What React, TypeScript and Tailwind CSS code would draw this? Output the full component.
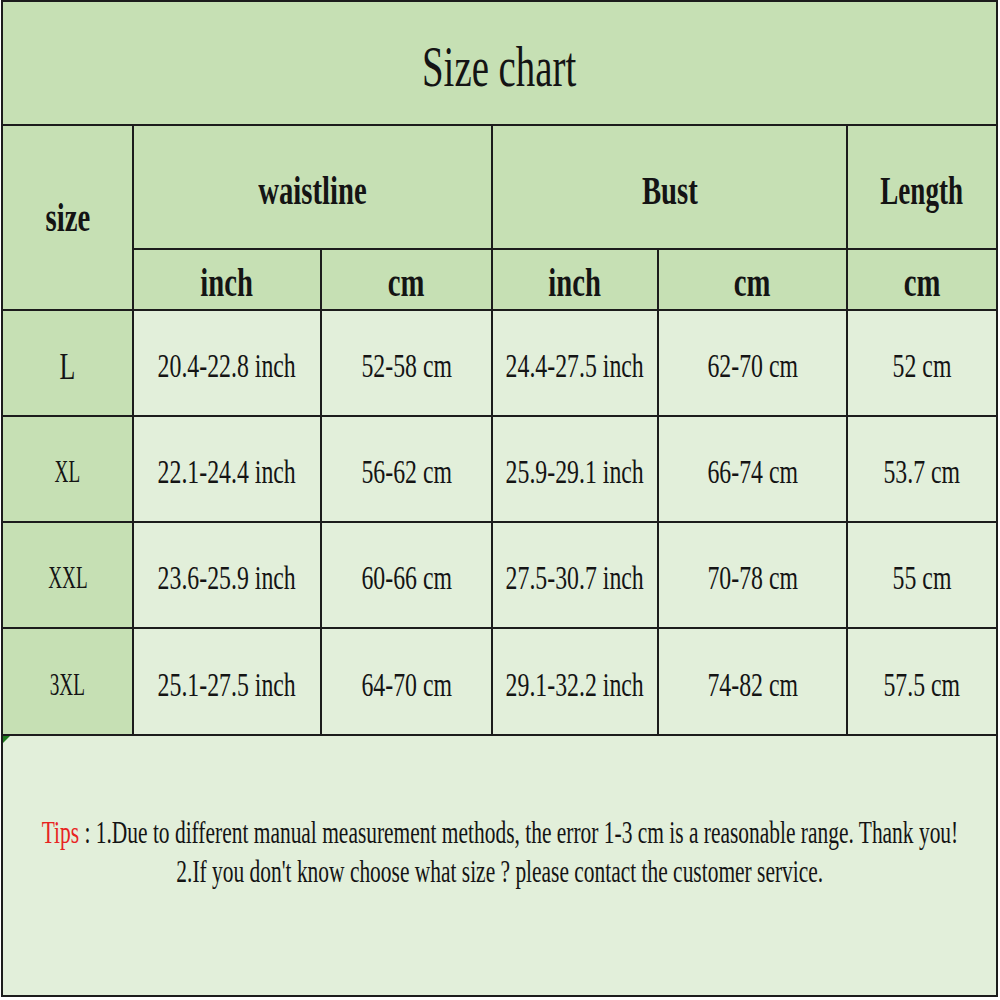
import React from "react";

const rows = [
  ["L", "20.4-22.8 inch", "52-58 cm", "24.4-27.5 inch", "62-70 cm", "52 cm"],
  ["XL", "22.1-24.4 inch", "56-62 cm", "25.9-29.1 inch", "66-74 cm", "53.7 cm"],
  ["XXL", "23.6-25.9 inch", "60-66 cm", "27.5-30.7 inch", "70-78 cm", "55 cm"],
  ["3XL", "25.1-27.5 inch", "64-70 cm", "29.1-32.2 inch", "74-82 cm", "57.5 cm"],
];

function Cell({
  children,
  className = "",
}: {
  children: React.ReactNode;
  className?: string;
}) {
  return (
    <div className={`flex items-center justify-center overflow-hidden ${className}`}>
      {children}
    </div>
  );
}

function T({ children, className = "" }: { children: React.ReactNode; className?: string }) {
  return (
    <span className={`inline-block whitespace-nowrap leading-none ${className}`}>
      {children}
    </span>
  );
}

export default function App() {
  return (
    <div className="w-[1000px] h-[1000px] overflow-hidden bg-white font-['Liberation_Serif',serif] text-[#141414]">
      <div className="ml-[1px] w-[997px] h-[997px] bg-[#1c1c1c] p-[2px] grid gap-[2px] grid-cols-[129px_186px_169px_164px_187px_148px] grid-rows-[122px_122px_59px_104px_104px_104px_105px_259px]">
        <Cell className="col-span-6 bg-[#c6e0b4]">
          <T className="text-[58px] scale-x-[0.67] pt-[8px]">Size chart</T>
        </Cell>

        <Cell className="row-span-2 bg-[#c6e0b4]">
          <T className="text-[41px] font-bold scale-x-[0.7]">size</T>
        </Cell>
        <Cell className="col-span-2 bg-[#c6e0b4]">
          <T className="text-[41px] font-bold scale-x-[0.7] pt-[6px]">waistline</T>
        </Cell>
        <Cell className="col-span-2 bg-[#c6e0b4]">
          <T className="text-[41px] font-bold scale-x-[0.7] pt-[6px]">Bust</T>
        </Cell>
        <Cell className="bg-[#c6e0b4]">
          <T className="text-[41px] font-bold scale-x-[0.66] pt-[6px]">Length</T>
        </Cell>

        <Cell className="bg-[#c6e0b4]">
          <T className="text-[41px] font-bold scale-x-[0.7] pt-[6px]">inch</T>
        </Cell>
        <Cell className="bg-[#c6e0b4]">
          <T className="text-[41px] font-bold scale-x-[0.7] pt-[6px]">cm</T>
        </Cell>
        <Cell className="bg-[#c6e0b4]">
          <T className="text-[41px] font-bold scale-x-[0.7] pt-[6px]">inch</T>
        </Cell>
        <Cell className="bg-[#c6e0b4]">
          <T className="text-[41px] font-bold scale-x-[0.7] pt-[6px]">cm</T>
        </Cell>
        <Cell className="bg-[#c6e0b4]">
          <T className="text-[41px] font-bold scale-x-[0.7] pt-[6px]">cm</T>
        </Cell>

        {rows.map((r) => (
          <React.Fragment key={r[0]}>
            <Cell className="bg-[#c6e0b4]">
              <T
                className={
                  r[0] === "L"
                    ? "text-[37px] scale-x-[0.7] pt-[6px]"
                    : "text-[32px] scale-x-[0.6] pt-[4px]"
                }
              >
                {r[0]}
              </T>
            </Cell>
            {r.slice(1).map((v, i) => (
              <Cell key={i} className="bg-[#e2efda]">
                <T className="text-[34px] scale-x-[0.7] pt-[6px]">{v}</T>
              </Cell>
            ))}
          </React.Fragment>
        ))}

        <div className="col-span-6 relative bg-[#e2efda] flex flex-col items-center justify-center pb-[28px] overflow-hidden">
          <div className="absolute left-0 top-0 w-0 h-0 border-t-[7px] border-r-[7px] border-t-[#1f7a1f] border-r-transparent" />
          <div className="h-[39px] w-full flex items-center justify-center">
            <T className="text-[32px] scale-x-[0.67]">
              <span className="text-[#e8231f]">Tips</span> : 1.Due to different manual measurement methods, the error 1-3 cm is a reasonable range. Thank you!
            </T>
          </div>
          <div className="h-[39px] w-full flex items-center justify-center">
            <T className="text-[32px] scale-x-[0.67]">
              2.If you don't know choose what size ? please contact the customer service.
            </T>
          </div>
        </div>
      </div>
    </div>
  );
}
